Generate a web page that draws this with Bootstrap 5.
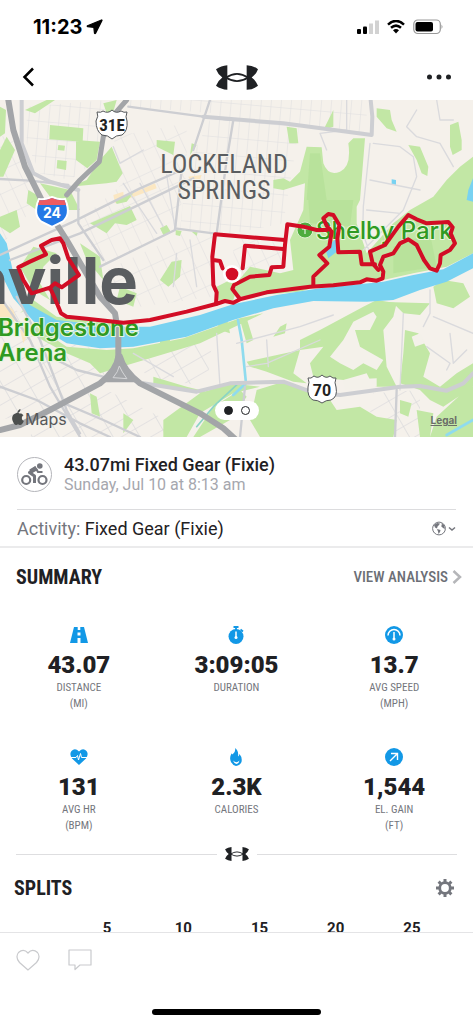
<!DOCTYPE html>
<html lang="en">
<head>
<meta charset="utf-8">
<meta name="viewport" content="width=device-width, initial-scale=1">
<title>Workout – 43.07mi Fixed Gear</title>
<link href="https://cdn.jsdelivr.net/npm/bootstrap@5.3.0/dist/css/bootstrap.min.css" rel="stylesheet">
<script defer src="https://cdn.jsdelivr.net/npm/bootstrap@5.3.0/dist/js/bootstrap.bundle.min.js"></script>
<style>
  body { font-family: Roboto, sans-serif; color: #1f2124; background: #fff; }
  svg { display: block; flex: none; }
  .plain { padding: 0; border: 0; background: none; color: inherit; display: block; }
  .statusbar { height: 54px; padding: 0 30px 0 33px; font: 700 20px/24px Inter, sans-serif; color: #000; }
  .topbar { height: 46px; padding: 0 22px; }
  .topbar > * { flex: 1 1 0; }
  .routemap svg { width: 100%; height: auto; }
  .town { font-family: Inter, sans-serif; }
  .district, .heading, .caption-sm, .analysis { font-family: "Liberation Sans Narrow", "Roboto Condensed", Roboto, sans-serif; }
  .pager { bottom: 17px; width: 44px; height: 19px; background: #fff; }
  .pager button { width: 9px; height: 9px; border: 1px solid #1f2124; border-radius: 50%; padding: 0; background: #fff; }
  .pager .on { background: #1f2124; }
  .legal { right: 16px; bottom: 10px; font: 700 10px/14px Inter, sans-serif; color: #6b6e68; }
  .workout { padding: 17px 0 15px; margin: 0 17px; border-bottom: 1px solid #dcdcde; }
  .sport { width: 35px; height: 35px; border: 1px solid #b4b5ba; }
  .workout h1 { font-size: 18px; line-height: 22px; font-weight: 500; }
  .workout p { font-size: 16px; line-height: 18px; color: #a6a7ae; }
  .kind { height: 38px; padding: 0 17px; font-size: 18px; border-bottom: 2px solid #ebebec; }
  .grey { color: #74767d; }
  .heading { font-size: 20px; line-height: 24px; font-weight: 700; margin: 0; }
  .analysis { font-size: 15px; line-height: 24px; font-weight: 500; color: #6c6f76; }
  .summary-head { padding: 17px 11px 37px 16px; }
  .tiles { display: grid; grid-template-columns: repeat(3, 1fr); row-gap: 36px; margin-bottom: 13px; }
  .figure-lg { font-size: 24px; line-height: 30px; font-weight: 900; margin-top: 6px; }
  .caption-sm { font-size: 11px; line-height: 16px; color: #74767d; }
  .rule { height: 1px; background: #dedee0; }
  .splits-head { padding: 15px 19px 0 14px; }
  .splits { padding: 16px 23px 0 69px; font: 700 15px/24px Roboto, sans-serif; }
  .actions { height: 91px; border-top: 1px solid #e4e4e6; background: #fff; }
  .homebar { width: 169px; height: 6px; background: #000; }
</style>
</head>
<body>
<div class="vh-100 d-flex flex-column overflow-hidden">
  <div class="statusbar d-flex align-items-center flex-shrink-0">
    <span>11:23</span>
    <svg class="ms-1" width="17" height="16" viewBox="0 0 17 16"><path d="M15.500 1 1.500 6.800Q.8 7.300 1.600 7.700L7.800 8.300 8.500 14.200Q9 15 9.600 14.200L16 1.600Q16.200.8 15.500 1Z" stroke="#000" stroke-width="1.200" stroke-linejoin="round"/></svg>
    <div class="ms-auto d-flex align-items-center gap-2">
      <svg width="22" height="14" viewBox="0 0 22 14"><rect y="9" width="4" height="5" rx="1"/><rect x="6" y="6.500" width="4" height="7.500" rx="1"/><path d="M12 3.500h4V14h-4zM18 .5h4V14h-4z" fill="#d2d2d2"/></svg>
      <svg width="18" height="14" viewBox="0 0 18 14"><path d="M1 4.600Q9-2.700 17 4.600M4 7.800Q9 3.400 14 7.800" fill="none" stroke="#000" stroke-width="2.500"/><path d="M6 10.200Q9 8 12 10.200L9 13.500Z"/></svg>
      <svg width="30" height="16" viewBox="0 0 30 16"><rect x=".8" y="1" width="26.500" height="13.500" rx="4" fill="none" stroke="#999" stroke-width="1.200"/><rect x="2.500" y="3" width="17.500" height="9.500" rx="2"/><path d="M28.500 5.500q2 2.300 0 4.500z" fill="#999"/></svg>
    </div>
  </div>

  <header class="topbar d-flex align-items-center flex-shrink-0">
    <div><button class="plain" aria-label="Back"><svg width="13" height="20" viewBox="0 0 13 20"><path d="M11 1.500 2.500 10 11 18.500" fill="none" stroke="#000" stroke-width="2.500"/></svg></button></div>
    <div class="d-flex justify-content-center">
      <svg width="42" height="25" viewBox="0 0 126 74"><g id="ua" fill="#1f2124"><path d="M0 12Q15 1 34 0V74Q15 73 0 62Q6 46 19 37Q6 28 0 12ZM126 12Q111 1 92 0V74Q111 73 126 62Q120 46 107 37Q120 28 126 12Z"/><path d="M30 37Q63 15 96 37Q63 59 30 37Z" fill="none" stroke="#1f2124" stroke-width="5"/></g></svg>
    </div>
    <div class="d-flex justify-content-end"><button class="plain" aria-label="More options"><svg width="24" height="7" viewBox="0 0 24 7"><path d="M0 3a2.500 2.500 0 0 1 5 0 2.500 2.500 0 0 1-5 0M9.500 3a2.500 2.500 0 0 1 5 0 2.500 2.500 0 0 1-5 0M19 3a2.500 2.500 0 0 1 5 0 2.500 2.500 0 0 1-5 0" fill="#1f2124"/></svg></button></div>
  </header>

  <main class="flex-grow-1 overflow-hidden">
    <section class="routemap position-relative">
      <svg viewBox="0 0 473 337" role="img" aria-label="Route map">
        <defs>
          <pattern id="ga" width="30" height="52" patternUnits="userSpaceOnUse" patternTransform="rotate(5)"><path d="M0 0H30M0 0V52" stroke="#dedddf" stroke-width="3" fill="none"/></pattern>
          <pattern id="gb" width="40" height="64" patternUnits="userSpaceOnUse" patternTransform="rotate(-25)"><path d="M0 0H40M0 0V64" stroke="#dedddf" stroke-width="3" fill="none"/></pattern>
          <pattern id="gc" width="44" height="70" patternUnits="userSpaceOnUse" patternTransform="rotate(60)"><path d="M0 0H44M0 0V70" stroke="#dcdbdd" stroke-width="4" fill="none"/></pattern>
        </defs>
        <rect width="473" height="337" fill="#f5f1eb"/>
        <g transform="scale(.33333)" fill="none" stroke-linejoin="round" stroke-linecap="round">
          <!-- street grids -->
          <path fill="url(#ga)" d="M80 20 320 0 300 100 290 180 210 240 120 220 80 130ZM380 0H1100V60L1090 100 900 70 850 370 700 400 540 390 560 200 640 40 380 20Z"/>
          <path fill="url(#gb)" d="M340 110 560 70 560 220 530 390 300 500 240 360 370 250ZM0 110 60 100 120 300 0 440ZM550 400 640 400 640 590 420 620 300 520ZM700 410 850 420 840 520 760 550 700 520Z"/>
          <path fill="url(#gc)" d="M0 590 60 640 180 720 330 760 340 810 180 920 0 960ZM110 960 300 860 500 960 520 1011 90 1011ZM400 760 640 700 620 860 440 830ZM1120 880 1260 870 1260 1011H1160V940H1110Z"/>
          <path fill="#fbe7c2" d="M340 285 370 275 372 300 345 310ZM385 285 465 250 470 265 390 295ZM565 230 605 225 600 240 570 240ZM0 600 40 630 50 660 0 690ZM60 690 90 690 70 730Z"/>
          <!-- parks -->
          <g fill="#c2e7a5">
            <path d="M150 75 250 85 248 125 148 118ZM228 120 300 125 290 180 262 205 228 180ZM300 180 335 140 368 220 350 245 320 250 210 260 260 240ZM75 30 140 0H165L105 40ZM0 150 20 110 45 150 10 230 0 230ZM310 10 350 0 330 70ZM175 135 195 137 193 152 173 150ZM172 180 200 183 198 210 170 205ZM0 20 18 30 15 100 0 110Z"/>
            <path d="M120 250 210 270 240 330 200 330 150 290ZM85 270 120 290 110 330 80 310ZM0 350 50 330 60 380 30 400 0 380ZM270 370 390 318 410 360 380 375 345 370 320 400ZM345 300 400 280 380 305 350 312ZM470 120 525 125 520 165 470 140ZM575 130 590 135 570 165ZM480 385 500 375 512 395 490 405ZM527 390 545 393 540 408 527 405ZM575 395 593 397 590 408ZM515 485 545 480 540 530 505 560 480 540Z"/>
            <path d="M860 80 890 85 895 130 868 130ZM975 80 1000 30 1000 80 970 90ZM820 240 850 235 870 245 900 215 920 140 965 142 970 190Q985 230 1020 215T1045 130L1060 115 1095 115 1080 300 1070 320 1070 370 1080 400 1100 460 1180 370 1230 330 1300 290 1340 240 1380 200 1419 170V460L1340 500 1240 520 1150 540 950 560 900 575 720 590 700 560 750 500 840 520 880 510 870 420 910 330 915 250 850 270 820 265Z"/>
            <path d="M1130 25 1170 30 1175 60 1190 95 1160 85 1130 50ZM1225 135 1260 140 1285 200 1282 228 1265 220 1250 180ZM1350 75 1375 65 1385 120 1385 150 1358 165 1350 140ZM650 560 690 540 715 550 700 600 655 600Z"/>
            <path d="M60 640 100 600 170 650 340 670 330 680 160 665 90 620ZM110 680 200 740 320 750 400 745 550 715 720 655 790 640 600 730 400 790 300 820 270 790 200 760 90 700ZM170 460 130 500 120 550 150 600 100 570 60 500 100 440ZM240 430 300 470 310 540 260 480ZM360 560 410 580 400 620 350 600Z"/>
            <path d="M300 750 340 760 330 810 290 790ZM480 720 510 715 510 740 480 740ZM640 640 680 650 690 700 660 690ZM460 830 560 860 640 880 600 880 460 850ZM490 960 600 880 690 850 780 860 700 880 600 940 560 1011H490ZM270 880 290 890 300 950 275 940ZM370 940 400 960 370 1000ZM640 920 720 870 740 890 690 960 600 1011H580Z"/>
            <path d="M770 870 850 845 940 880 980 885 1010 930 1080 920 1130 950 1190 960 1180 1011H780L750 960ZM740 785 900 750 900 720 960 690 1090 620 1130 600 1190 610 1180 650 1150 690 1160 800 1190 860 1120 860 1100 820 1030 840 940 830 930 790 970 740 900 750 880 820 920 850 880 845 800 815 750 800Z"/>
            <path d="M1130 605 1290 610 1260 645 1210 640 1180 610ZM1215 690 1255 700 1290 760 1270 830 1320 860 1370 820 1419 790V860L1330 920 1290 900 1260 870 1200 850 1210 760ZM1300 560 1330 540 1390 550 1410 590 1360 625 1310 610ZM1310 950 1419 850V1011H1290ZM1200 900 1235 910 1225 950 1200 940ZM1250 930 1300 940 1290 1011H1260ZM840 680 860 670 855 700 820 710ZM720 660 740 655 760 720 740 730Z"/>
          </g>
          <path fill="#a9dd8c" opacity=".4" d="M925 300 1060 300 1050 380 930 370ZM1180 440 1290 400 1310 500 1180 520ZM930 160H960L980 300H920Z"/>
          <path fill="#f4f1ea" d="M1060 665 1120 635 1130 650 1110 690 1065 690 1080 740 1150 780 1130 810 1090 790 1060 810 1020 790 990 770 1030 720ZM1235 710 1260 700 1275 730 1245 740ZM1030 840 1130 835 1130 860 1035 870Z"/>
          <!-- river -->
          <path fill="#78d2f1" d="M0 400 20 430 38 510 60 570 90 615 170 660 350 680 450 680 600 645 699 613 830 585 960 565 1150 545 1240 525 1330 508 1419 460V505L1340 545 1260 570 1180 600 1100 605 940 603 820 625 699 660 560 710 400 740 300 745 200 730 110 675 40 595 0 515ZM1405 270 1419 235V305L1400 300ZM1175 238 1188 240 1188 255 1175 255ZM975 445 1010 415 1010 455 985 475Z"/>
          <path stroke="#8fdbee" stroke-width="8" d="M714 660 725 720 738 850 700 885M1340 1005 1419 960"/>
          <path stroke="#8ad4c5" stroke-width="5" d="M715 850 640 920 590 980"/>
          <!-- streets -->
          <g stroke="#dadadd" stroke-width="4">
            <path d="M420 250 490 380M500 225 525 385M370 250 470 400M340 140 360 190 430 150M1120 130 1200 140 1240 170 1250 230 1210 330 1090 450M1110 240 1260 270M1250 30 1220 80 1250 110 1320 130 1360 200M1310 0 1320 60 1360 60M1040 0 1040 90 960 100 980 150M1290 570 1290 640 1270 680M1210 640 1200 870M1280 740 1350 790 1340 810M1350 700 1360 790 1400 750M1300 650 1419 700M530 460 520 560M570 420 590 560M710 730 900 680 1000 645M800 720 805 800M740 800 800 790 960 720M400 760 520 830M650 700 660 860M1110 130 1090 320 1088 400 1110 460M1100 330 1200 340"/>
          </g>
          <g stroke="#cdced2">
            <path stroke-width="7" d="M0 237 90 242 205 255M0 465 220 365 420 265 545 210M30 480 240 400 580 235M235 270 235 370 310 480M545 210 525 390 300 500M525 385 640 400M630 0 580 150M700 60 680 180 650 400M385 20 610 50 699 60M0 590 90 720 150 860 240 1011M50 590 120 720 200 930 240 1000M150 770 230 810 330 835M0 860 110 900 240 970 330 1011M180 905 310 960 420 1011M735 860 720 1011M1190 870 1185 1011"/>
            <path stroke-width="12" d="M65 0 65 130 100 220 150 245 235 270M610 50 850 70 1115 105 1117 50 1112 0M430 850 590 875 690 850 850 845 940 878 1020 885 1200 860 1260 858 1340 872 1390 850 1419 820"/>
          </g>
          <g stroke="#a3a5a8">
            <path stroke-width="18" d="M25 0 40 90 75 200 130 310 200 420 300 590 345 640 355 700 355 800"/>
            <path stroke-width="15" d="M380 0 345 40 310 110 298 185 240 240 200 285"/>
            <path stroke-width="18" d="M355 770Q350 810 300 850L150 930 60 975 0 990M360 770Q370 810 420 850L600 940 670 985 720 1030"/>
            <path stroke-width="10" fill="#a3a5a8" d="M355 790 310 842H410Z"/>
            <path stroke="#d4d5d7" stroke-width="3" d="M340 832Q355 815 358 798Q365 815 380 835Z"/>
          </g>
        </g>
        <!-- place names -->
        <g fill="#5a5d60">
          <g class="district" font-size="26" text-anchor="middle" stroke="#f4f1ea" stroke-width="2" paint-order="stroke"><text x="224" y="73">LOCKELAND</text><text x="224" y="99">SPRINGS</text></g>
          <text class="town" x="138" y="204" font-size="65" font-weight="700" text-anchor="end">Nashville</text>
        </g>
        <g class="town" fill="#2f9a22" font-weight="600" stroke="#e9f5dd" stroke-width="2" paint-order="stroke">
          <text x="-2" y="236" font-size="24">Bridgestone</text>
          <text x="-2" y="261" font-size="24">Arena</text>
          <text x="316" y="139" font-size="24" font-weight="500">Shelby Park</text>
        </g>
        <circle cx="305" cy="130" r="8" fill="#4eac3e" stroke="#dff0d0"/><path d="M305 134V127M302 129a3 3 0 1 1 6 0z" fill="#fff" stroke="#fff" stroke-width="1"/>
        <!-- road shields -->
        <g font-weight="700" text-anchor="middle">
          <path d="M97 12q4 1 6-1 5 3 9-1 4 4 9 1 3 2 6 1-2 5 0 9 1 10-5 14-6 0-10 4-4-4-10-4-6-4-6-14 3-5 1-9Z" fill="#fff" stroke="#55585b"/>
          <text x="112" y="31" font-size="17" class="district" fill="#222">31E</text>
          <path d="M308 278q3 1 6-2 4 3 8-1 4 4 8 1 3 3 6 2-2 5 0 9 2 10-5 13-5 0-9 3-4-3-9-3-6-3-5-13 2-5 0-9Z" fill="#fff" stroke="#55585b"/>
          <text x="322" y="296" font-size="16" fill="#222">70</text>
          <path d="M39 99Q45 100 52 97 59 100 65 99 72 115 62 122L52 127 42 122Q32 115 39 99Z" fill="#2378e6" stroke="#fff" stroke-width="2"/>
          <path d="M39.500 100Q45 101 52 98 59 101 64.500 100L66 105H38Z" fill="#ee5a62"/>
          <text x="52" y="118" font-size="14" fill="#fff" class="town">24</text>
        </g>
        <!-- recorded route -->
        <g transform="scale(.33333)" fill="none" stroke="#d20d25" stroke-width="12" stroke-linejoin="round" stroke-linecap="round">
          <path d="M150 563 95 580 70 540 55 502 90 485 138 463 123 437 155 420 180 415 190 430 205 475 237 525 185 562 165 550 150 563 160 585 175 620 183 640 200 650 260 656 370 668 450 660 560 635 648 612 675 603 700 608 722 597 800 577 930 560 1000 556 1080 547 1100 538 1130 542 1148 535 1150 515 1140 495 1150 470 1180 460 1200 430 1225 418 1250 435 1272 480 1290 505 1310 512 1320 490 1322 465 1350 450 1365 430 1352 400 1358 382 1345 366 1280 370 1250 358 1225 345 1195 380 1155 435 1110 455 1118 490 1135 510"/>
          <path d="M1125 493H1085L1080 455 1015 457 1012 415 1018 375 1000 345 985 342 970 355 980 377 995 395 988 440 958 465 982 490 940 530 940 558M980 390 950 390 910 380 862 373 855 435 850 500 815 502 808 525 750 530 702 555 697 567 720 597"/>
          <path d="M855 420 645 403 637 470 640 555 650 577 648 612M850 447 735 437 728 505M640 480 660 483 668 505"/>
          <circle cx="696" cy="522" r="27" fill="#fff" stroke="none"/><circle cx="696" cy="522" r="19" fill="#d20d25" stroke="none"/>
        </g>
        <path d="M19.500 313.500c-1-1-3-1-4 0-3 1-4 4-3 7 1 3 2.500 5 4 4.500 1-.6 2-.6 3 0 2 .6 3.500-2 4.300-4-2.500-1.200-2.500-4.500-.3-5.700-1.500-2-3-2-4-1.800ZM17.500 313c0-2 1-3.500 3-4 0 2-1 3.500-3 4Z" fill="#4b4e4d"/>
        <text class="town" x="25" y="325" font-size="16" fill="#55585a">Maps</text>
      </svg>
      <div class="pager position-absolute start-50 translate-middle-x rounded-pill d-flex align-items-center justify-content-center gap-2">
        <button class="on" aria-label="Map"></button><button aria-label="Chart"></button>
      </div>
      <a class="legal position-absolute" href="#">Legal</a>
    </section>

    <section class="workout d-flex align-items-center">
      <div class="sport rounded-circle d-flex align-items-center justify-content-center">
        <svg width="27" height="23" viewBox="0 0 27 23" fill="none" stroke="#74767d"><circle cx="5.200" cy="17" r="4" stroke-width="2.200"/><circle cx="21.500" cy="17" r="4" stroke-width="2.200"/><circle cx="18.800" cy="3" r="2.800" fill="#74767d" stroke="none"/><path d="M15 4.500 8.500 9.500 13.500 13V20" stroke-width="3" stroke-linejoin="round"/><path d="M15 5.500 17 9H21.500" stroke-width="2"/><path d="M9.500 8.500 15.500 5" stroke-width="4.500"/></svg>
      </div>
      <div class="ms-2 ps-1">
        <h1 class="m-0">43.07mi Fixed Gear (Fixie)</h1>
        <p class="m-0">Sunday, Jul 10 at 8:13 am</p>
      </div>
    </section>
    <section class="kind d-flex align-items-center">
      <span><span class="grey">Activity:</span> Fixed Gear (Fixie)</span>
      <button class="plain ms-auto" aria-label="Privacy: public">
        <svg width="24" height="15" viewBox="0 0 24 15"><circle cx="7" cy="7.500" r="6.400" fill="none" stroke="#74767d"/><path d="M2 4 5 2 8 2.500 7 4 5.500 5.500 5 7.500 3 6.500ZM9 2 12 4 13 8 11 7 9 5 10 4ZM5 8 8.500 9 8 11 6.500 13 6 10.500Z" fill="#74767d"/><path d="m17 6.500 3 2.500 3-2.500" fill="none" stroke="#74767d" stroke-width="1.500"/></svg>
      </button>
    </section>

    <section>
      <div class="summary-head d-flex align-items-center justify-content-between">
        <h2 class="heading">SUMMARY</h2>
        <a class="analysis text-decoration-none d-flex align-items-center" href="#">VIEW ANALYSIS
          <svg class="ms-1" width="10" height="14" viewBox="0 0 10 14"><path d="m1.500 1 6.500 6-6.500 6" fill="none" stroke="#b5b6b9" stroke-width="2.500"/></svg></a>
      </div>
      <div class="tiles text-center">
        <div>
          <svg class="mx-auto" width="18" height="18" viewBox="0 0 18 18"><path d="M4 1H7.700V4H10.300V1H14L18 17H10.500V12H7.500V17H0ZM7.500 6.500V9.500H10.500V6.500Z" fill="#1298e6" fill-rule="evenodd"/></svg>
          <div class="figure-lg">43.07</div><div class="caption-sm">DISTANCE<br>(MI)</div>
        </div>
        <div>
          <svg class="mx-auto" width="18" height="18" viewBox="0 0 18 18"><circle cx="9" cy="10.500" r="7.500" fill="#1298e6"/><path d="M6.500 1H11.500M9 1V4M13.500 3.500 16 5.500" stroke="#1298e6" stroke-width="1.800"/><path d="M9 5.500V11" stroke="#fff" stroke-width="1.500"/><circle cx="9" cy="11.500" r="1.500" fill="#fff"/></svg>
          <div class="figure-lg">3:09:05</div><div class="caption-sm">DURATION</div>
        </div>
        <div>
          <svg class="mx-auto" width="18" height="18" viewBox="0 0 18 18"><circle cx="9" cy="9" r="9" fill="#1298e6"/><path d="M3 9.500A6 6 0 0 1 15 9.500M9 6V13" stroke="#fff" stroke-width="1.500" fill="none"/><circle cx="9" cy="13" r="1.500" fill="#fff"/></svg>
          <div class="figure-lg">13.7</div><div class="caption-sm">AVG SPEED<br>(MPH)</div>
        </div>
        <div>
          <svg class="mx-auto" width="18" height="18" viewBox="0 0 18 18"><path d="M9 17 2 10.500Q-1 6 1.500 3 5-.5 9 3.500 13-.5 16.500 3 19 6 16 10.500Z" fill="#1298e6"/><path d="M1 9.500H6L7.500 7.500 8.500 12 10.500 5.500 11.500 9.500H17" stroke="#fff" fill="none"/></svg>
          <div class="figure-lg">131</div><div class="caption-sm">AVG HR<br>(BPM)</div>
        </div>
        <div>
          <svg class="mx-auto" width="18" height="18" viewBox="0 0 18 18"><path d="M8 0Q9 4 5.500 6.500 5 5.500 4.500 5.500 2 10 4 14 6 17.500 9 18 13 17.500 14.500 14 15.500 9.500 12.500 6 12 8 11 8.500 12 3 8 0Z" fill="#1298e6"/><path d="M6 12.500Q9.500 16 12.500 12.500 12 15.500 9.500 16 7 15.500 6 12.500Z" fill="#fff"/></svg>
          <div class="figure-lg">2.3K</div><div class="caption-sm">CALORIES</div>
        </div>
        <div>
          <svg class="mx-auto" width="18" height="18" viewBox="0 0 18 18"><circle cx="9" cy="9" r="9" fill="#1298e6"/><path d="M5 13 12.500 5.500M6 5.500H12.500V12" stroke="#fff" stroke-width="1.400" fill="none"/></svg>
          <div class="figure-lg">1,544</div><div class="caption-sm">EL. GAIN<br>(FT)</div>
        </div>
      </div>
    </section>

    <div class="d-flex align-items-center gap-2 px-3">
      <div class="rule flex-grow-1"></div>
      <svg width="24" height="14" viewBox="0 0 126 74"><use href="#ua"/></svg>
      <div class="rule flex-grow-1"></div>
    </div>

    <section>
      <div class="splits-head d-flex align-items-center justify-content-between">
        <h2 class="heading">SPLITS</h2>
        <button class="plain" aria-label="Split settings">
          <svg width="18" height="18" viewBox="0 0 18 18"><g fill="none" stroke="#74767d"><circle cx="9" cy="9" r="5.300" stroke-width="2.800"/><path d="M9 0V3M9 15V18M0 9H3M15 9H18M2.600 2.600 4.800 4.800M13.200 13.200 15.400 15.400M15.400 2.600 13.200 4.800M4.800 13.200 2.600 15.400" stroke-width="3"/></g></svg>
        </button>
      </div>
      <div class="splits d-flex text-center">
        <div class="col">5</div><div class="col">10</div><div class="col">15</div><div class="col">20</div><div class="col">25</div>
      </div>
    </section>
  </main>

  <footer class="actions flex-shrink-0 d-flex flex-column justify-content-between pb-2">
    <div class="d-flex gap-4 px-3 pt-3">
      <button class="plain me-1" aria-label="Like"><svg width="24" height="22" viewBox="0 0 24 22"><path d="M12 21 3.500 13.500Q-1 8 2.500 3.500 7.500-1 12 4 16.500-1 21.500 3.500 25 8 20.500 13.500Z" fill="none" stroke="#c9cacd" stroke-width="1.200"/></svg></button>
      <button class="plain" aria-label="Comment"><svg width="24" height="22" viewBox="0 0 24 22"><path d="M1 1H23V16H12L7 20.500V16H1Z" fill="none" stroke="#c9cacd" stroke-width="1.200" stroke-linejoin="round"/></svg></button>
    </div>
    <div class="homebar rounded-pill mx-auto"></div>
  </footer>
</div>
</body>
</html>
